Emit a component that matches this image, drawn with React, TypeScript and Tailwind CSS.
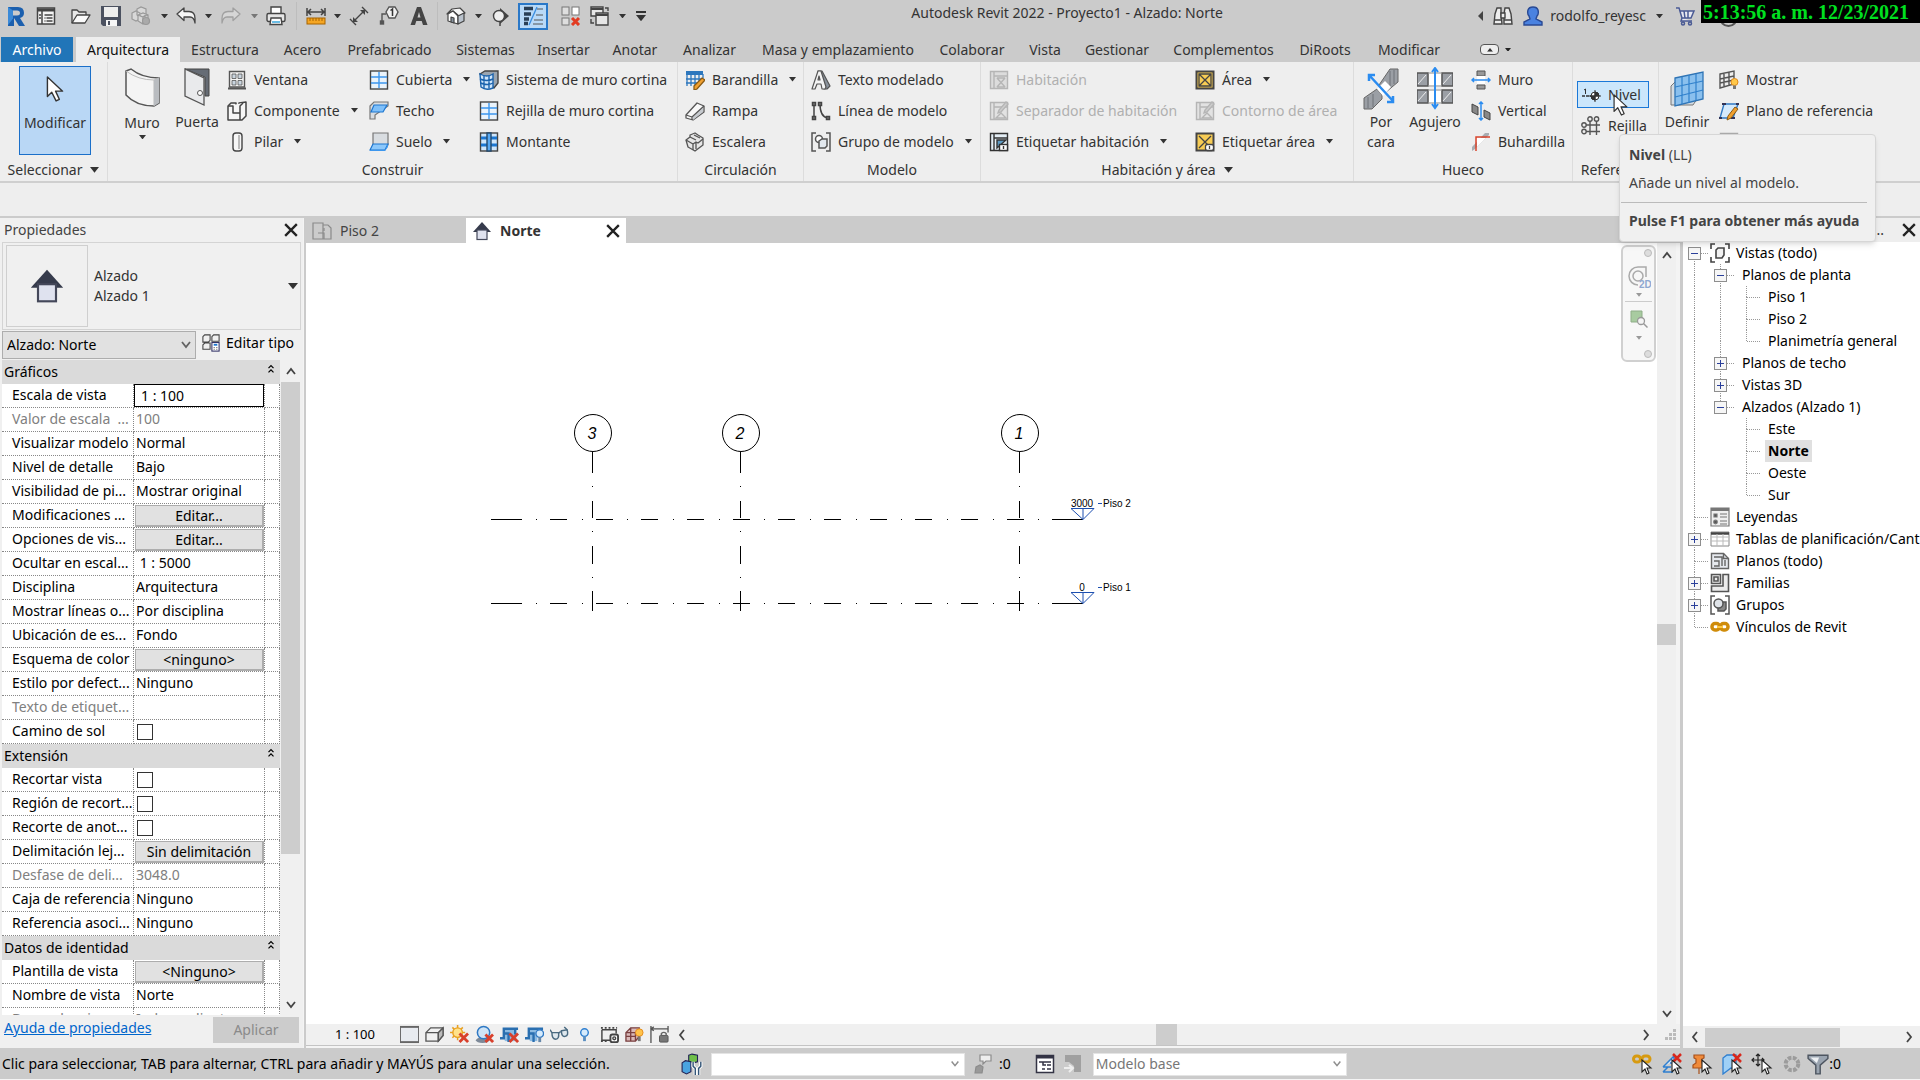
import type { ReactNode } from "react";

const icons: Record<string, ReactNode> = {
  revit: (
    <>
      <path d="M2 1h10q6 0 6 6 0 4-4 5l5 8h-6l-5-8v8H2z" fill="#1b5fae" />
      <path d="M7 4.500h4q3 0 3 2.500t-3 2.500H7z" fill="#cbcbcb" />
      <path d="M2 1l5 3.500v8L2 19z" fill="#3b8ad8" />
    </>
  ),
  menu: (
    <g fill="none" stroke="#444" strokeWidth="1.500">
      <rect x="1.500" y="2" width="17" height="16" fill="#f4f4f4" />
      <path d="M1.500 4h17" strokeWidth="3" />
      <path d="M6 5v13M8.500 9h8M10.500 12h6M10.500 15h6" />
      <path d="M8.500 12h1M8.500 15h1M3 9h2M3 12h2" />
    </g>
  ),
  open: (
    <g fill="#e8e8e8" stroke="#444" strokeWidth="1.300" strokeLinejoin="round">
      <path d="M1 17V4h5l2 2h7v3" />
      <path d="M1 17l5-8h13l-5 8z" fill="#fafafa" />
    </g>
  ),
  save: (
    <>
      <path d="M0 0h20v20H2l-2-2z" fill="#4b5160" />
      <path d="M3 1h14v10H3z" fill="#eee" />
      <path d="M5 14h11v6H5z" fill="#f6f6f6" />
      <path d="M7 15h2v4H7z" fill="#4b5160" />
    </>
  ),
  cube: (
    <g fill="#d8d8d8" stroke="#999" strokeWidth="1.200">
      <path d="M1 7l4-2 4 2v6l-4 2-4-2zM6 3l4-2 5 2v6l-5 3-4-3z" />
      <path d="M7 9l5-2 5 2v6l-5 3-5-3zM7 9l5 2 5-2M12 11v7" />
      <circle cx="15" cy="15" r="3.500" fill="#aaa" />
    </g>
  ),
  undo: <path d="M1 8l7-6v3.500h5q6 0 6 7V17q-1-6-5-6H8v3.500z" fill="#f5f5f5" stroke="#444" strokeWidth="1.300" strokeLinejoin="round" />,
  redo: <path d="M19 8l-7-6v3.500H7q-6 0-6 7V17q1-6 5-6h6v3.500z" fill="#d6d6d6" stroke="#a0a0a0" strokeWidth="1.300" strokeLinejoin="round" />,
  print: (
    <g stroke="#444" strokeWidth="1.400">
      <path d="M5 8V1h10v7" fill="#fff" />
      <rect x="1" y="7.500" width="18" height="8" rx="1.500" fill="#e6e6e6" />
      <path d="M5 12h10l1 6.500H4z" fill="#fff" />
      <path d="M6 16h8" stroke="#2a9fd8" />
    </g>
  ),
  measure: (
    <>
      <path d="M2 6h16M5 3L2 6l3 3M15 3l3 3-3 3M1 2v8M19 2v8" fill="none" stroke="#444" strokeWidth="1.500" />
      <rect x="1" y="12" width="18" height="6" fill="#f5a623" stroke="#a86400" />
      <path d="M4 12v3M7 12v3M10 12v3M13 12v3M16 12v3" stroke="#a86400" />
    </>
  ),
  dimension: (
    <g fill="none" stroke="#444" strokeWidth="1.400">
      <path d="M4 16L16 4M1 13l6 6M13 1l6 6" />
      <path d="M4 16v-5l5 5zM16 4v5l-5-5z" fill="#444" stroke="none" />
    </g>
  ),
  tag: (
    <>
      <g fill="none" stroke="#555" strokeWidth="1.400">
        <path d="M10 1h6l3 5-3 6h-6L7 6z" fill="#f2f2f2" />
        <path d="M7 8H3v8" />
        <rect x="1.500" y="15" width="3" height="3" fill="#555" />
      </g>
      <path d="M11.500 4.500L13.500 3v7" fill="none" stroke="#333" strokeWidth="1.500" />
    </>
  ),
  letterA: <path d="M8 1h4l6.500 18H14l-1.300-4H7.300L6 19H1.500zM8.500 11.500h3L10 6z" fill="#444" />,
  house3d: (
    <g stroke="#444" strokeWidth="1.200" strokeLinejoin="round">
      <path d="M1 8l5-5 8-1 5 5-6 3-6-5z" fill="#f4f4f4" />
      <path d="M2 8l5-3 5 5v8l-10-3z" fill="#fff" />
      <path d="M12 10l6-3v8l-6 3z" fill="#b9c2cc" />
      <path d="M5 16v-5l3 1v5z" fill="#8894a0" />
    </g>
  ),
  section: (
    <>
      <path d="M10 2l9 8-9 8z" fill="#444" />
      <circle cx="9" cy="10" r="5.500" fill="#eee" stroke="#444" strokeWidth="1.400" />
      <path d="M10 16v4" stroke="#444" strokeWidth="1.500" />
    </>
  ),
  thin: (
    <g fill="none" stroke="#2b3f55">
      <path d="M1 2.500h9M1 8h7M1 13h5M1 17.500h4" strokeWidth="3.500" />
      <path d="M14 1L6 19" stroke="#3a8de0" strokeWidth="1.300" />
      <path d="M14 3h6M13 9h7M11 14h9M10 18h10" stroke="#555" />
    </g>
  ),
  closeWins: (
    <>
      <g fill="#dedede" stroke="#777">
        <rect x="1" y="1" width="7" height="8" /><rect x="11" y="1" width="7" height="8" fill="#fff" /><rect x="1" y="12" width="7" height="7" />
      </g>
      <path d="M11 12l7 7M18 12l-7 7" stroke="#e23b22" strokeWidth="3" />
    </>
  ),
  switchWins: (
    <g fill="#e6e6e6" stroke="#444" strokeWidth="1.400">
      <path d="M1 1h12v9H1z" /><path d="M6 7h12v12H6z" /><path d="M1 3h12M6 9h12" strokeWidth="2" />
      <path d="M15 2h3v3M1 13v4h3" fill="none" />
    </g>
  ),
  binoculars: (
    <g fill="#eee" stroke="#444" strokeWidth="1.400">
      <path d="M4 2h4v6l1 10H1l1-10zM12 2h4l2 6 1 10h-8V8z" /><path d="M8 7h4v5H8zM1 14h8M11 14h8" />
    </g>
  ),
  user: <path d="M6 10Q4 8 5 4q1-3 5-3t5 3q1 4-1 6l-1 3 6 3v3H1v-3l6-3z" fill="#4a82e0" stroke="#2a4a94" strokeWidth="1.400" />,
  cart: (
    <g fill="none" stroke="#4a5a94" strokeWidth="1.500">
      <path d="M1 2h3l3 10h9l3-7H5M7 12l-1 3h11" fill="#e8e8f0" /><path d="M9 5l1 7M13 5v7" /><circle cx="8" cy="17.500" r="1.500" /><circle cx="15" cy="17.500" r="1.500" />
    </g>
  ),
  window: (
    <g fill="#f4f4f4" stroke="#555" strokeWidth="1.400">
      <path d="M2.500 1.500h15V17h-15z" /><path d="M5 4h4v4.500H5zM11 4h4v4.500h-4zM5 10.500h4V15H5zM11 10.500h4V15h-4z" fill="#c9d4de" strokeWidth=".8" /><path d="M1 18.500h18" strokeWidth="2" />
    </g>
  ),
  component: (
    <g fill="#f6f6f6" stroke="#444" strokeWidth="1.500" strokeLinejoin="round">
      <path d="M1 5l3-3h5v9h3V2l7-1v14l-4 4H1z" /><path d="M1 5h5v7h7V5l3-3M13 5v14" />
    </g>
  ),
  column: (
    <g stroke="#444" strokeWidth="1.400">
      <rect x="6" y="1" width="9" height="18" rx="3" fill="#f6f6f6" /><path d="M12 3v14" stroke="#bbb" strokeWidth="2" />
    </g>
  ),
  grid: (
    <>
      <rect x="1.500" y="1" width="17" height="18" fill="#eaf3fb" stroke="#444" strokeWidth="1.400" />
      <path d="M10 2v16M2 7h16M2 13h16" stroke="#3d97ee" strokeWidth="1.400" />
    </>
  ),
  ceiling: (
    <g strokeWidth="1.200" stroke="#777">
      <path d="M1 5l4-4h14v4L6 14v4H1z" fill="#d9dde1" /><path d="M5 4h13l-4 7H2z" fill="#7fc0fa" stroke="#1c76d0" />
    </g>
  ),
  floor: (
    <g strokeWidth="1.200">
      <path d="M4 1h15v12H4z" fill="#d9dde1" stroke="#777" /><path d="M1 18l3-6h15l-3 6z" fill="#8cc8fb" stroke="#1c76d0" /><path d="M1 18h15l3-6v3l-3 4H1z" fill="#3d97ee" />
    </g>
  ),
  curtainSystem: (
    <g stroke="#1b63ad" strokeWidth="1.400">
      <path d="M1 4l5-3h13v12l-4 5z" fill="#9aa5b0" stroke="#444" /><path d="M1 4q7 4 13 0v14q-7 3-12-1z" fill="#cfe6fb" /><path d="M5 5.500v13M10 5.500v13M1 9q7 3 13 0M1.500 13q7 3 12.500 0" fill="none" />
    </g>
  ),
  mullion: (
    <g strokeWidth="1.400">
      <rect x="1.500" y="1" width="17" height="18" fill="#cfe6fb" stroke="#444" /><path d="M2 6h16M2 13h16" stroke="#1c76d0" strokeWidth="3" /><path d="M8 1h4v18H8z" fill="#59a9f2" stroke="#24496c" />
    </g>
  ),
  railing: (
    <g fill="none" stroke="#2d77bd" strokeWidth="1.300">
      <path d="M1 3h17" strokeWidth="4" /><path d="M2 4v12M6 4v12M10 4v12M14 4v8M18 4v4M1 9h17M1 13h12" /><path d="M17 8l3 2-8 9-3 1v-4z" fill="#f0a030" stroke="#8a5a12" />
    </g>
  ),
  ramp: (
    <g fill="#f8f8f8" stroke="#555" strokeWidth="1.300" strokeLinejoin="round">
      <path d="M1 14L12 2l7 3v6L8 19l-7-2z" /><path d="M8 16l10-9v4L8 19z" fill="#c6cacf" stroke="none" /><path d="M1 14l6 2 12-11M7 16v3" fill="none" />
    </g>
  ),
  stair: (
    <g fill="#e6e6e6" stroke="#555" strokeWidth="1.300" strokeLinejoin="round">
      <path d="M1 8l4-3V3l5-2 3 2 5 3v7l-8 6-7-4z" /><path d="M1 8l7 4 3-2 2 1 5-4M5 5l6 3M8 12v6M11 10v7M9 3l6 3" fill="none" />
    </g>
  ),
  modelText: (
    <g stroke="#555" strokeWidth="1.200" strokeLinejoin="round">
      <path d="M7 1h4l8 15-3 3h-3L8 4z" fill="#8a929b" /><path d="M7 1h3l5 16-1 2h-3l-1-5H6l-2 5H1zM7 10h2L8 6z" fill="#f4f4f4" />
    </g>
  ),
  modelLine: (
    <g fill="none" stroke="#444" strokeWidth="1.500">
      <path d="M3 3v14M9 3q0 13 8 14" /><path d="M1.500 1.500h3v3h-3zM1.500 15.500h3v3h-3zM7.500 1.500h3v3h-3zM15.500 15.500h3v3h-3z" fill="#777" />
    </g>
  ),
  group: (
    <g fill="none" stroke="#555" strokeWidth="1.500">
      <path d="M5 1H1v18h4M15 1h4v18h-4" /><circle cx="8" cy="7" r="3.500" fill="#fff" /><path d="M8 9l3-2h5v7l-2 2H8z" fill="#e2e8ee" />
    </g>
  ),
  groups: (
    <g fill="none" stroke="#555" strokeWidth="1.500">
      <path d="M5 1H1v18h4M15 1h4v18h-4" /><path d="M8 8l3-1h5v7l-2 2H8z" fill="#888" /><circle cx="8.500" cy="8.500" r="4.500" fill="#dfe3e8" />
    </g>
  ),
  room: (
    <g fill="none" stroke="#b5b5b5" strokeWidth="1.400">
      <path d="M1.500 1.500h17v17h-17z" fill="#dcdcdc" /><path d="M5 2v16M5 6h13" /><path d="M8 8l8 9M16 8l-8 9M8 8h8M8 17h8" />
    </g>
  ),
  roomSep: (
    <g fill="none" stroke="#b5b5b5" strokeWidth="1.400">
      <path d="M1.500 1.500h17v17h-17z" fill="#e2e2e2" /><path d="M5 2v16M5 6h13M7 17l5-5 5 5z" /><path d="M17 1l2 2-7 8-3 1 1-3z" fill="#ccc" />
    </g>
  ),
  roomTag: (
    <g fill="none" stroke="#333" strokeWidth="1.400">
      <path d="M1.500 1.500h17v17h-17z" fill="#e4eef5" /><path d="M5 2v16M5 6h13" /><path d="M8 8h9l-9 8z" fill="#5d9bc4" /><rect x="10.500" y="12.500" width="8" height="6" fill="#fff" /><path d="M14.500 14v3" />
    </g>
  ),
  area: (
    <g stroke="#444" strokeWidth="1.300">
      <rect x="1.500" y="1.500" width="17" height="17" fill="#f7cc54" strokeWidth="2" /><path d="M4 4l12 12M16 4L4 16M4 4h12v12H4z" fill="none" />
    </g>
  ),
  areaTag: (
    <g stroke="#444" strokeWidth="1.300">
      <rect x="1.500" y="1.500" width="17" height="17" fill="#f7cc54" strokeWidth="2" /><path d="M4 4l12 12M16 4L4 16" /><rect x="10.500" y="12.500" width="8" height="6" rx="2" fill="#fff" /><path d="M14.500 14v3" />
    </g>
  ),
  wallOpen: (
    <>
      <path d="M6 1h8v5H6zM6 15h8v4H6z" fill="#999" stroke="#555" /><path d="M6 6h8v8H6z" fill="#fff" />
      <path d="M1 10h18M3 8l-2 2 2 2M17 8l2 2-2 2" fill="none" stroke="#2b8cf0" strokeWidth="1.500" />
    </>
  ),
  vertical: (
    <>
      <path d="M1 3l6 3v8l-6-3zM13 9l6 3v7l-6-3z" fill="#888" stroke="#444" />
      <path d="M10 1v18M8 3l2-2 2 2M8 17l2 2 2-2" fill="none" stroke="#2b8cf0" strokeWidth="1.500" />
    </>
  ),
  dormer: (
    <>
      <path d="M1 19l3-2 14-14V1h-4L1 15z" fill="#a9adb2" /><path d="M6 15V6h9L6 15z" fill="#fff" />
      <path d="M5 19V5h14" fill="none" stroke="#d9442c" strokeWidth="1.500" />
    </>
  ),
  level: (
    <g stroke="#333">
      <path d="M1 11h9" strokeDasharray="3 1" strokeWidth="1.400" /><path d="M3 5l1.500-1v5" fill="none" /><circle cx="14" cy="11" r="4" fill="#fff" /><path d="M14 7a4 4 0 014 4h-8a4 4 0 004 4z" fill="#333" /><path d="M14 5v12M8 11h12" />
    </g>
  ),
  gridLines: (
    <g fill="none" stroke="#555" strokeWidth="1.400">
      <circle cx="9" cy="3" r="2.200" /><circle cx="15.500" cy="3" r="2.200" /><circle cx="3" cy="9" r="2.200" /><circle cx="3" cy="15.500" r="2.200" /><path d="M9 5v14M15.500 5v14M5 9h14M5 15.500h14" />
    </g>
  ),
  show: (
    <>
      <path d="M1 4l14-3v13L1 18zM5 3v14M10 2v13M1 9l14-3M1 13l14-3" fill="none" stroke="#555" strokeWidth="1.400" />
      <circle cx="15.500" cy="12" r="3.500" fill="#ffc84a" stroke="#e08a1a" /><path d="M14 15.500h3v3.500h-3z" fill="#777" />
    </>
  ),
  refPlane: (
    <>
      <path d="M5 3h14l-5 14H1z" fill="#d5eafc" stroke="#3079c4" strokeWidth="1.400" />
      <path d="M3 3h4M17 3h3M0 17h3M12 17h4" stroke="#335" strokeWidth="2" />
      <path d="M16 6l3 2-7 9-4 2 1-4z" fill="#f0a030" stroke="#8a5a12" />
    </>
  ),
  viewer: <path d="M1.500 1.500h17v17h-17zM2 6h16M8 6v12" fill="#ccc" stroke="#aaa" strokeWidth="1.400" />,
  elevation: (
    <>
      <path d="M10 1l9 10H1z" fill="#363b4c" /><rect x="5" y="9" width="10" height="9.500" fill="#dfe2ef" stroke="#44485a" strokeWidth="1.200" />
    </>
  ),
  plan: (
    <g fill="none" stroke="#8a8a8a" strokeWidth="1.200">
      <path d="M1 2h10v16H1zM11 4h5l3 3v11H8" /><path d="M6 12h6v6M12 7v3" />
    </g>
  ),
  editType: (
    <g fill="none" stroke="#444" strokeWidth="1.200">
      <path d="M1 3l2-2h6v6l-2 2H1zM1 12l2-2h6v7H1zM11 3l2-2h6v7h-8z" /><rect x="11" y="9.500" width="8" height="9.500" fill="#fff" stroke="#336" /><path d="M13 12h4" stroke="#1c76d0" strokeWidth="2" /><path d="M13 15h1M16 15h1M13 17h1M16 17h1" />
    </g>
  ),
  scale: <rect x="0" y="2" width="20" height="16" fill="#e8ebf0" stroke="#666" strokeWidth="2" />,
  box: (
    <g fill="#f1f1f1" stroke="#555" strokeWidth="1.400">
      <path d="M1 8l5-5h13v8l-5 6H1z" /><path d="M14 8l5-5v8l-5 6z" fill="#bbb" /><path d="M1 8h13v9M14 8l5-5" fill="none" />
    </g>
  ),
  sun: (
    <>
      <path d="M8 0v16M0 8h16M2.500 2.500l11 11M13.500 2.500l-11 11" stroke="#e8a020" strokeWidth="1.600" /><circle cx="8" cy="8" r="5" fill="#ffe28a" stroke="#e8a020" strokeWidth="1.500" />
      <path d="M10 9l9 9M19 9l-9 9" stroke="#d8402c" strokeWidth="3" />
    </>
  ),
  shadow: (
    <>
      <ellipse cx="8" cy="16" rx="7" ry="3" fill="#7d8998" /><circle cx="9" cy="8" r="6.500" fill="#cfe4f6" stroke="#3079c4" strokeWidth="1.600" />
      <path d="M11 10l8 8M19 10l-8 8" stroke="#d8402c" strokeWidth="3" />
    </>
  ),
  crop: (
    <>
      <path d="M5 5h12v12H5z" fill="#8dbbe2" /><path d="M0 14h4V4h15M5 9h4v9M16 4v6" fill="none" stroke="#2a6fb0" strokeWidth="2.500" /><path d="M10 9l9 9M19 9l-9 9" stroke="#d8402c" strokeWidth="3" />
    </>
  ),
  cropShow: (
    <>
      <path d="M5 5h8v12H5z" fill="#8dbbe2" /><path d="M0 14h4V4h15M5 9h4v9" fill="none" stroke="#2a6fb0" strokeWidth="2.500" /><circle cx="15.500" cy="9" r="4" fill="#d6ebfc" stroke="#3079c4" strokeWidth="1.400" /><path d="M14 13h3v5h-3z" fill="#68a" />
    </>
  ),
  glasses: (
    <g fill="#dfe8ee" stroke="#4a6a80" strokeWidth="1.500">
      <path d="M2 8h7q1 7-3 7T2 8zM12 6l6-1q2 6-2 7t-4-6z" /><path d="M9 9q1-2 3-2M2 8L0 5M18 5l-3-3" fill="none" />
    </g>
  ),
  bulb: (
    <>
      <circle cx="10" cy="8" r="4" fill="#d6ebfc" stroke="#2f7fd0" strokeWidth="1.500" /><path d="M8.500 12h3v5h-3z" fill="#5b8fc0" />
    </>
  ),
  viewProps: (
    <g fill="none" stroke="#444" strokeWidth="1.500">
      <path d="M2 5v11h9M2 5h15v4" /><path d="M1 3h17M1 17h8" strokeDasharray="2 2" strokeWidth="2" /><rect x="11" y="10" width="8" height="8" rx="2" fill="#fff" strokeWidth="2" /><circle cx="15" cy="14" r="1.500" />
    </g>
  ),
  analytic: (
    <>
      <path d="M1 8l5-5h9v9l-4 5H1zM1 8h10v9M6 3v14M1 12h10" fill="#d9b9b9" stroke="#7a4040" strokeWidth="1.400" /><circle cx="15" cy="8" r="4" fill="#ffc24a" stroke="#e48a1a" /><path d="M13.500 12h3v5h-3z" fill="#777" />
    </>
  ),
  lockView: (
    <>
      <path d="M1 1v18M19 1v7M1 4h18M4 2L1 4l3 2" fill="none" stroke="#555" strokeWidth="1.400" /><rect x="10" y="11" width="9" height="7" rx="1" fill="#777" stroke="#555" /><path d="M12 11V9q2.500-2.500 5 0v2" fill="none" stroke="#666" strokeWidth="1.500" />
    </>
  ),
  workset: (
    <g stroke="#225" strokeWidth="1">
      <path d="M7 2l3-1 5 1v6l-4 1-4-1z" fill="#6fbf4a" /><path d="M1 9l3-2 5 1v9l-4 2-4-2z" fill="#4aa3e0" /><path d="M11 8v4l2 2v6M18 8v4l-2 2v6" fill="none" stroke="#fff" strokeWidth="3" /><path d="M11 8v4l2 2v6M18 8v4l-2 2v6" fill="none" stroke="#357" strokeWidth="1.300" />
    </g>
  ),
  editable: (
    <g fill="#eee" stroke="#8c8c8c" strokeWidth="1.200">
      <path d="M7 1h11v6h-5l-3 3V7H7z" /><path d="M2 19l1-6 4-2 3 2-1 6z" fill="#999" />
    </g>
  ),
  options: (
    <g fill="none" stroke="#334" strokeWidth="1.500">
      <path d="M1.500 1.500h17v17h-17z" fill="#fff" /><path d="M2 3h16" strokeWidth="3" /><path d="M4 8h4v3h3M8 8h8M12 11h4M7 15h3M12 15h4" />
    </g>
  ),
  addOption: (
    <>
      <path d="M2 1h16v17h-7v-6L6 8H2z" fill="#a0a0a0" /><path d="M1 14h8M6 11l4 3-4 4" fill="none" stroke="#eee" strokeWidth="2" />
    </>
  ),
  chain: (
    <g fill="none" stroke="#d08c0a" strokeWidth="3.500">
      <rect x="2" y="6.500" width="7.500" height="6.500" rx="3" /><rect x="10.500" y="6.500" width="7.500" height="6.500" rx="3" /><path d="M7 10h6" stroke="#ffc83d" strokeWidth="2" />
    </g>
  ),
  legend: (
    <g fill="#efefef" stroke="#777" strokeWidth="1.200">
      <path d="M1 1h18v18H1z" /><path d="M1 2.500h18" strokeWidth="3" /><path d="M4 7h3v3H4z" fill="#555" /><circle cx="5.500" cy="15" r="1.800" fill="#555" /><path d="M10 7h7M10 10h7M10 14h7M10 17h7" />
    </g>
  ),
  schedule: (
    <g fill="#fff" stroke="#888" strokeWidth="1">
      <path d="M1 3h18v14H1z" /><path d="M1 4.500h18" stroke="#444" strokeWidth="2.500" /><path d="M1 8h18M1 12h18M7 5v12M13 5v12" stroke="#bbb" />
    </g>
  ),
  sheet: (
    <g fill="none" stroke="#666" strokeWidth="1.400">
      <path d="M1.500 2.500h12l5 5v10h-17z" fill="#e6e9ee" /><path d="M4 6h8v9M4 10h5v5H4M15 9v6M13.500 2.500v5h5" />
    </g>
  ),
  family: (
    <g fill="#ececec" stroke="#555" strokeWidth="1.600">
      <path d="M1.500 1.500h9v9h-9zM1.500 13v5.500h17v-17H13V13z" /><path d="M4 4h4v4H4z" />
    </g>
  ),
  views: (
    <g fill="none" stroke="#444" strokeWidth="1.600">
      <path d="M1 6V1h4M15 1h4v5M1 14v5h4M15 19h4v-5" /><path d="M6 7l2-2h6v7l-2 3H6z" fill="#f2f2f2" />
    </g>
  ),
};

function Icon({ name, className = "size-5" }: { name: string; className?: string }) {
  return (
    <svg viewBox="0 0 20 20" className={`${className} shrink-0`} aria-hidden="true">
      {icons[name]}
    </svg>
  );
}

function Caret({ className = "w-2 fill-[#333]" }: { className?: string }) {
  return (
    <svg viewBox="0 0 8 5" className={`${className} shrink-0`} aria-hidden="true">
      <path d="M0 0h8L4 5z" />
    </svg>
  );
}

function Cross({ className = "size-3" }: { className?: string }) {
  return (
    <svg viewBox="0 0 12 12" className={className} aria-hidden="true">
      <path d="M1 1l10 10M11 1L1 11" stroke="#222" strokeWidth="2" />
    </svg>
  );
}

function Chevron({ dir, className = "size-3" }: { dir: "up" | "down" | "left" | "right"; className?: string }) {
  const d = { up: "M2 9l4-5 4 5", down: "M2 3l4 5 4-5", left: "M8 1L4 6l4 5", right: "M4 1l4 5-4 5" }[dir];
  return (
    <svg viewBox="0 0 12 12" className={`${className} shrink-0`} aria-hidden="true">
      <path d={d} fill="none" stroke="#444" strokeWidth="1.800" />
    </svg>
  );
}

function Pointer({ className }: { className: string }) {
  return (
    <svg viewBox="0 0 16 24" className={className} aria-hidden="true">
      <path d="M1 1v18l4-4 4 8 3-1.500L8.500 14H15z" fill="#fff" stroke="#333" strokeWidth="1.300" strokeLinejoin="round" />
    </svg>
  );
}

function ToolButton({ name, label, w }: { name: string; label: string; w: string }) {
  return (
    <button aria-label={label} className={`flex h-full items-center justify-center ${w}`}>
      <Icon name={name} />
    </button>
  );
}

function ToolCaret({ label, dim }: { label: string; dim?: boolean }) {
  return (
    <button aria-label={label} className="flex h-full w-4 items-center justify-center">
      <Caret className={dim ? "w-[7px] fill-[#777]" : "w-[7px] fill-[#333]"} />
    </button>
  );
}

function TitleBar() {
  return (
    <header className="flex h-[37px] items-start">
      <div className="flex h-8 items-center">
        <ToolButton name="revit" label="Revit" w="w-8" />
        <ToolButton name="menu" label="Inicio" w="w-7" />
        <ToolButton name="open" label="Abrir" w="ml-1.5 w-[30px]" />
        <ToolButton name="save" label="Guardar" w="w-[30px]" />
        <ToolButton name="cube" label="Sincronizar" w="w-[30px]" />
        <ToolCaret label="Más sincronizar" />
        <ToolButton name="undo" label="Deshacer" w="w-7" />
        <ToolCaret label="Lista deshacer" />
        <ToolButton name="redo" label="Rehacer" w="w-[30px]" />
        <ToolCaret label="Lista rehacer" dim />
        <ToolButton name="print" label="Imprimir" w="w-7" />
        <span className="mx-1.5 h-7 w-px bg-[#bdbdbd]" />
        <ToolButton name="measure" label="Medir" w="w-[26px]" />
        <ToolCaret label="Más medir" />
        <ToolButton name="dimension" label="Cota alineada" w="w-7" />
        <ToolButton name="tag" label="Etiquetar" w="w-8" />
        <ToolButton name="letterA" label="Texto" w="w-7" />
        <span className="mx-1 h-7 w-px bg-[#bdbdbd]" />
        <ToolButton name="house3d" label="Vista 3D" w="w-7" />
        <ToolCaret label="Más vistas 3D" />
        <ToolButton name="section" label="Sección" w="mr-1 w-7" />
        <button aria-label="Líneas finas" className="flex h-[27px] w-[30px] items-center justify-center border-2 border-[#2a78c8] bg-[#b9d9f7]">
          <Icon name="thin" />
        </button>
        <ToolButton name="closeWins" label="Cerrar ventanas inactivas" w="ml-2 w-[30px]" />
        <ToolButton name="switchWins" label="Cambiar ventanas" w="w-7" />
        <ToolCaret label="Lista de ventanas" />
        <button aria-label="Personalizar" className="ml-1.5 flex flex-col items-center gap-0.5">
          <span className="h-0.5 w-2.5 bg-[#333]" />
          <Caret className="w-2.5 fill-[#333]" />
        </button>
      </div>
      <h1 className="min-w-0 flex-1 truncate pl-[10px] text-center text-sm leading-[26px]">
        Autodesk Revit 2022 - Proyecto1 - Alzado: Norte
      </h1>
      <div className="flex h-8 items-center">
        <svg viewBox="0 0 5 10" className="mr-2.5 h-2.5 w-[5px]" aria-hidden="true"><path d="M5 0v10L0 5z" fill="#444" /></svg>
        <button aria-label="Buscar"><Icon name="binoculars" /></button>
        <button className="ml-2.5 flex items-center">
          <Icon name="user" />
          <span className="ml-[7px] text-sm">rodolfo_reyesc</span>
          <Caret className="ml-2.5 w-[7px] fill-[#333]" />
        </button>
        <button aria-label="Autodesk App Store" className="ml-3"><Icon name="cart" /></button>
        <div className="relative ml-1.5 h-full w-[219px]">
          <span className="absolute top-2 left-[18px] size-[19px] rounded-full border-2 border-[#555]" />
          <time className="absolute inset-x-0 top-0 h-[23px] bg-black pl-[2px] font-['Liberation_Serif',serif] text-[20px] leading-[24px] font-bold text-[#00e020]">
            5:13:56 a. m. 12/23/2021
          </time>
        </div>
      </div>
    </header>
  );
}

const tabs = [
  ["Estructura", "w-[90px]"],
  ["Acero", "w-[65px]"],
  ["Prefabricado", "w-[109px]"],
  ["Sistemas", "w-[83px]"],
  ["Insertar", "w-[73px]"],
  ["Anotar", "w-[70px]"],
  ["Analizar", "w-[79px]"],
  ["Masa y emplazamiento", "w-[178px]"],
  ["Colaborar", "w-[90px]"],
  ["Vista", "w-[56px]"],
  ["Gestionar", "w-[88px]"],
  ["Complementos", "w-[125px]"],
  ["DiRoots", "w-[78px]"],
  ["Modificar", "w-[90px]"],
];

function RibbonTabs() {
  return (
    <nav className="flex h-[25px] text-sm leading-[25px] whitespace-nowrap">
      <button className="ml-px w-[72px] bg-[#2175b8] text-white">Archivo</button>
      <button className="ml-[3px] w-[104px] bg-[#eee] text-[#111]">Arquitectura</button>
      {tabs.map(([label, w]) => (
        <button key={label} className={w}>{label}</button>
      ))}
      <button aria-label="Minimizar cinta" className="ml-[26px] flex items-center gap-1.5">
        <span className="flex h-[11px] w-[19px] items-center justify-center rounded border border-[#555] bg-[#eee]">
          <Caret className="w-1.5 rotate-180 fill-[#333]" />
        </span>
        <Caret className="w-1.5 fill-[#222]" />
      </button>
    </nav>
  );
}

function Small({ icon, label, caret, dim }: { icon: string; label: string; caret?: boolean; dim?: boolean }) {
  return (
    <button disabled={dim} className={`flex h-[31px] items-center gap-[7px] whitespace-nowrap ${dim ? "text-[#b0b0b0]" : ""}`}>
      <Icon name={icon} />
      <span>{label}</span>
      {caret && <Caret className="ml-1 w-[7px] fill-[#333]" />}
    </button>
  );
}

function Group({ title, w, caret, children }: { title: string; w: string; caret?: boolean; children: ReactNode }) {
  return (
    <section className={`flex shrink-0 flex-col border-r border-[#dcdcdc] ${w}`}>
      <div className="flex h-[97px] pt-0.5">{children}</div>
      <h2 className="flex h-[22px] items-center justify-center gap-2 whitespace-nowrap">
        {title}
        {caret && <Caret className="w-[9px] fill-[#333]" />}
      </h2>
    </section>
  );
}

function Ribbon() {
  return (
    <div className="flex h-[121px] border-b-2 border-[#cfcfcf] bg-[#eee] text-sm">
      <Group title="Seleccionar" w="w-[108px]" caret>
        <button className="mt-0.5 ml-[19px] flex h-[89px] w-[72px] flex-col items-center border border-[#1a6fc9] bg-[#b9d7f5] pt-[9px]">
          <Pointer className="h-[26px] w-[18px]" />
          <span className="mt-[11px]">Modificar</span>
        </button>
      </Group>
      <Group title="Construir" w="w-[570px]">
        <button className="ml-3 flex w-11 flex-col items-center">
          <svg viewBox="0 0 36 40" className="mt-[4px] h-10 w-9" aria-hidden="true">
            <path d="M2 3l5-2q11 9 28 9v25l-5 3Q12 38 2 27z" fill="#f4f4f4" stroke="#555" strokeWidth="1.500" />
            <path d="M2 3q12 9 28 9v26M30 12l5-2" fill="none" stroke="#bbb" />
            <path d="M30 12l5-2v25l-5 3z" fill="#b9bcc0" />
          </svg>
          <span className="mt-[5px]">Muro</span>
          <Caret className="mt-0.5 w-[7px] fill-[#333]" />
        </button>
        <button className="ml-[7px] flex w-[52px] flex-col items-center">
          <svg viewBox="0 0 30 40" className="mt-[3px] h-10 w-[30px]" aria-hidden="true">
            <path d="M3 2h24v27h-4V10z" fill="#666c75" stroke="#444" />
            <path d="M3 2l19 9v27L3 29z" fill="#e9eaec" stroke="#555" strokeWidth="1.300" />
            <circle cx="18" cy="26" r="2.500" fill="#fff" stroke="#555" />
          </svg>
          <span className="mt-[5px]">Puerta</span>
        </button>
        <div className="ml-1 w-[142px]">
          <Small icon="window" label="Ventana" />
          <Small icon="component" label="Componente" caret />
          <Small icon="column" label="Pilar" caret />
        </div>
        <div className="w-[110px]">
          <Small icon="grid" label="Cubierta" caret />
          <Small icon="ceiling" label="Techo" />
          <Small icon="floor" label="Suelo" caret />
        </div>
        <div>
          <Small icon="curtainSystem" label="Sistema de muro cortina" />
          <Small icon="grid" label="Rejilla de muro cortina" />
          <Small icon="mullion" label="Montante" />
        </div>
      </Group>
      <Group title="Circulación" w="w-[126px]">
        <div className="ml-[7px]">
          <Small icon="railing" label="Barandilla" caret />
          <Small icon="ramp" label="Rampa" />
          <Small icon="stair" label="Escalera" />
        </div>
      </Group>
      <Group title="Modelo" w="w-[177px]">
        <div className="ml-[7px]">
          <Small icon="modelText" label="Texto modelado" />
          <Small icon="modelLine" label="Línea de modelo" />
          <Small icon="group" label="Grupo de modelo" caret />
        </div>
      </Group>
      <Group title="Habitación y área" w="w-[373px]" caret>
        <div className="ml-2 w-[206px] whitespace-pre">
          <Small icon="room" label="Habitación" dim />
          <Small icon="roomSep" label="Separador de habitación" dim />
          <Small icon="roomTag" label="Etiquetar habitación" caret />
        </div>
        <div>
          <Small icon="area" label="Área" caret />
          <Small icon="roomSep" label="Contorno de área" dim />
          <Small icon="areaTag" label="Etiquetar área" caret />
        </div>
      </Group>
      <Group title="Hueco" w="w-[219px]">
        <button className="ml-1.5 flex w-[42px] flex-col items-center">
          <svg viewBox="0 0 36 44" className="mt-[3px] h-11 w-9" aria-hidden="true">
            <path d="M1 31L14 22l5 6v4L9 42H1zM35 2v13L23 25l-7-7L27 2z" fill="#9b9fa5" stroke="#666" />
            <path d="M5 30v11M10 27v13M27 4v16M31 3v14" stroke="#6f7378" />
            <path d="M14 22l8-8 6 6-8 9z" fill="#fff" />
            <path d="M6 8l24 26M6 14V8h6M24 35h6v-6" fill="none" stroke="#2b8cf0" strokeWidth="2.500" />
          </svg>
          <span className="mt-[1px]">Por</span>
          <span>cara</span>
        </button>
        <button className="ml-[3px] flex w-[60px] flex-col items-center">
          <svg viewBox="0 0 36 44" className="mt-[3px] h-11 w-9" aria-hidden="true">
            <path d="M0 6h11v13H0zM25 6h11v13H25zM0 23h11v13H0zM25 23h11v13H25z" fill="#9b9fa5" stroke="#555" strokeWidth="1.500" />
            <path d="M1 17L9 8M26 17l8-9M1 34l8-9M26 34l8-9" stroke="#eee" />
            <path d="M12 7h12v11H12zM12 24h12v11H12z" fill="#fff" />
            <path d="M11 6h14M11 19h14M11 23h14M11 36h14" stroke="#999" />
            <path d="M18 2v38M15 5l3-4 3 4M15 37l3 4 3-4" fill="none" stroke="#2b8cf0" strokeWidth="2" />
          </svg>
          <span className="mt-[1px]">Agujero</span>
        </button>
        <div className="ml-[6px]">
          <Small icon="wallOpen" label="Muro" />
          <Small icon="vertical" label="Vertical" />
          <Small icon="dormer" label="Buhardilla" />
        </div>
      </Group>
      <Group title="Referencia" w="w-[86px]">
        <div className="ml-1 pt-[17px]">
          <button className="relative flex h-[27px] w-[72px] items-center gap-[7px] border border-[#1a78d8] bg-[#cbe6fb] pl-[3px]">
            <Icon name="level" />
            Nivel
            <Pointer className="absolute top-3 left-[35px] h-[22px] w-[15px]" />
          </button>
          <button className="mt-1 flex h-[27px] items-center gap-[7px] pl-1">
            <Icon name="gridLines" />
            Rejilla
          </button>
        </div>
      </Group>
      <section className="flex pt-0.5">
        <button className="flex w-14 flex-col items-center">
          <svg viewBox="0 0 34 42" className="mt-1 h-[42px] w-[34px]" aria-hidden="true">
            <path d="M1 18l5-5h21v18l-4 6H1z" fill="#d3dbe2" stroke="#777" />
            <path d="M5 10l28-6v27L5 38z" fill="#8ac0ee" stroke="#2f74b5" strokeWidth="1.300" />
            <path d="M12 9v27M19 7v28M26 6v26M5 19l28-6M5 29l28-7" stroke="#2f80cc" strokeWidth="1.200" />
          </svg>
          <span className="mt-[2px]">Definir</span>
        </button>
        <div className="ml-1 w-[200px]">
          <Small icon="show" label="Mostrar" />
          <Small icon="refPlane" label="Plano de referencia" />
          <button aria-label="Visor" className="flex h-[31px] items-center"><Icon name="viewer" /></button>
        </div>
      </section>
    </div>
  );
}

type Kind = "text" | "edit" | "dim" | "button" | "check";
type Prop = [string, string, Kind];

const sections: { title: string; rows: Prop[] }[] = [
  {
    title: "Gráficos",
    rows: [
      ["Escala de vista", "1 : 100", "edit"],
      ["Valor de escala  ...", "100", "dim"],
      ["Visualizar modelo", "Normal", "text"],
      ["Nivel de detalle", "Bajo", "text"],
      ["Visibilidad de pi...", "Mostrar original", "text"],
      ["Modificaciones ...", "Editar...", "button"],
      ["Opciones de vis...", "Editar...", "button"],
      ["Ocultar en escal...", " 1 : 5000", "text"],
      ["Disciplina", "Arquitectura", "text"],
      ["Mostrar líneas o...", "Por disciplina", "text"],
      ["Ubicación de es...", "Fondo", "text"],
      ["Esquema de color", "<ninguno>", "button"],
      ["Estilo por defect...", "Ninguno", "text"],
      ["Texto de etiquet...", "", "dim"],
      ["Camino de sol", "", "check"],
    ],
  },
  {
    title: "Extensión",
    rows: [
      ["Recortar vista", "", "check"],
      ["Región de recort...", "", "check"],
      ["Recorte de anot...", "", "check"],
      ["Delimitación lej...", "Sin delimitación", "button"],
      ["Desfase de deli...", "3048.0", "dim"],
      ["Caja de referencia", "Ninguno", "text"],
      ["Referencia asoci...", "Ninguno", "text"],
    ],
  },
  {
    title: "Datos de identidad",
    rows: [
      ["Plantilla de vista", "<Ninguno>", "button"],
      ["Nombre de vista", "Norte", "text"],
      ["Dependencia", "Independiente", "dim"],
    ],
  },
];

function PropValue({ label, value, kind }: { label: string; value: string; kind: Kind }) {
  if (kind === "edit") {
    return <input aria-label={label} defaultValue={value} className="block h-[23px] w-full border border-black bg-white px-1.5" />;
  }
  if (kind === "button") {
    return (
      <button aria-label={label} className="ml-px block h-[22px] w-[129px] border border-r-2 border-b-2 border-[#adadad] bg-[#e1e1e1] leading-[19px]">
        {value}
      </button>
    );
  }
  if (kind === "check") {
    return <input type="checkbox" aria-label={label} className="ml-[3px] block size-4 appearance-none border border-[#333] bg-white" />;
  }
  return <span className="block pb-0.5 pl-0.5 whitespace-pre">{value}</span>;
}

function Properties() {
  return (
    <aside className="flex w-[303px] shrink-0 flex-col bg-[#f0f0f0] pl-0.5">
      <div className="flex h-6 items-center justify-between pr-[5px] pl-0.5 text-sm text-[#444]">
        <h2>Propiedades</h2>
        <button aria-label="Cerrar propiedades"><Cross className="size-3.5" /></button>
      </div>
      <button className="mr-0.5 flex h-[88px] items-center border border-[#d4d4d4] pl-[3px] text-left text-sm text-[#333]">
        <span className="flex size-[82px] items-center justify-center border border-[#cfcfcf]">
          <Icon name="elevation" className="size-9" />
        </span>
        <span className="ml-1.5 flex-1">Alzado<br />Alzado 1</span>
        <Caret className="mr-0.5 w-2.5 fill-[#333]" />
      </button>
      <div className="flex h-[30px] items-center text-sm text-black">
        <span className="relative block h-7 w-[194px]">
          <select aria-label="Tipo" className="h-full w-full appearance-none border border-[#adadad] bg-[#e1e1e1] pl-1">
            <option>Alzado: Norte</option>
          </select>
          <Chevron dir="down" className="pointer-events-none absolute top-2 right-1 size-3 opacity-80" />
        </span>
        <button className="ml-1.5 flex items-center gap-1.5 pb-1"><Icon name="editType" className="size-[18px]" />Editar tipo</button>
      </div>
      <div className="flex min-h-0 flex-1">
        <div className="min-h-0 flex-1 overflow-hidden bg-white">
          <table className="w-full table-fixed border-separate border-spacing-0 text-sm text-black">
            <colgroup><col className="w-[132px]" /><col className="w-[131px]" /><col /></colgroup>
            {sections.map((s) => (
              <tbody key={s.title}>
                <tr>
                  <th colSpan={3} className="h-6 bg-[#dadada] p-0 pr-1 pl-0.5 text-left font-normal">
                    <div className="flex items-center justify-between">
                      {s.title}
                      <svg viewBox="0 0 10 12" className="mb-1.5 h-2.5 w-2.5" aria-hidden="true">
                        <path d="M2 5l3-3 3 3M2 10l3-3 3 3" fill="none" stroke="#000" strokeWidth="1.500" />
                      </svg>
                    </div>
                  </th>
                </tr>
                {s.rows.map(([label, value, kind]) => (
                  <tr key={label} className={kind === "dim" ? "text-[#808080]" : ""}>
                    <td className="h-6 border-r border-b border-dotted border-[#888] p-0 pb-0.5 pl-2.5 whitespace-pre">{label}</td>
                    <td className="h-6 border-r border-b border-dotted border-[#888] p-0"><PropValue label={label} value={value} kind={kind} /></td>
                    <td className="h-6 border-r border-b border-dotted border-[#888] p-0" />
                  </tr>
                ))}
              </tbody>
            ))}
          </table>
        </div>
        <div className="ml-px flex w-[19px] flex-col items-center bg-[#f0f0f0]">
          <Chevron dir="up" className="my-[5px] size-3" />
          <div className="h-[472px] w-full bg-[#cdcdcd]" />
          <Chevron dir="down" className="mt-auto mb-1 size-3" />
        </div>
        <div className="w-[3px]" />
      </div>
      <div className="flex h-[33px] items-start justify-between pt-0.5 pr-1 pl-0.5 text-sm">
        <a href="#ayuda" className="leading-[22px] text-[#0066cc] underline">Ayuda de propiedades</a>
        <button disabled className="h-[26px] w-[86px] bg-[#cccccc] text-[#8a8a8a]">Aplicar</button>
      </div>
    </aside>
  );
}

const gridAxes = [
  { x: 287, label: "3" },
  { x: 435, label: "2" },
  { x: 714, label: "1" },
];

const levels = [
  { y: 276, elevation: "3000", label: "Piso 2" },
  { y: 360, elevation: "0", label: "Piso 1" },
];

function Drawing() {
  return (
    <svg className="block h-full w-full font-['Liberation_Sans',sans-serif]" aria-label="Alzado Norte">
      {gridAxes.map(({ x, label }) => (
        <g key={label} stroke="#000" strokeWidth="1" fill="none">
          <circle cx={x} cy="190" r="18.500" />
          <text x={x - 1} y="196" fill="#000" stroke="none" textAnchor="middle" fontSize="16" fontStyle="italic">{label}</text>
          <path d={`M${x - 0.5} 209v21m0 13v1m0 14v17m0 13v1m0 14v18m0 13v1m0 13v20`} />
        </g>
      ))}
      {levels.map(({ y, elevation, label }) => (
        <g key={label}>
          <path d={`M185 ${y + 0.5}h31M747 ${y + 0.5}h30`} stroke="#000" />
          {Array.from({ length: 12 }, (_, i) => (
            <path key={i} d={`M${230 + Math.round(i * 45.65)} ${y + 0.5}h1m13 0h17`} stroke="#000" />
          ))}
          <path d={`M777 ${y + 0.5}l-12-11h23zv-11`} fill="none" stroke="#1c4fb0" />
          <text x="776" y={y - 12} textAnchor="middle" fontSize="10">{elevation}</text>
          <path d={`M792 ${y - 15.5}h4`} stroke="#1c4fb0" />
          <text x="797" y={y - 12} fontSize="10">{label}</text>
        </g>
      ))}
    </svg>
  );
}

const viewTools = [
  ["scale", "Escala"],
  ["box", "Estilo visual"],
  ["sun", "Camino de sol"],
  ["shadow", "Sombras"],
  ["crop", "Recortar vista"],
  ["cropShow", "Mostrar región de recorte"],
  ["glasses", "Ocultar temporalmente"],
  ["bulb", "Mostrar elementos ocultos"],
  ["viewProps", "Propiedades de vista temporales"],
  ["analytic", "Modelo analítico"],
  ["lockView", "Restricciones"],
];

function Workspace() {
  return (
    <main className="flex min-w-0 flex-1 flex-col">
      <div className="flex h-[25px] bg-[#cbcbcb] text-sm">
        <button className="flex w-40 items-center gap-2 pl-1.5 text-[#444]"><Icon name="plan" />Piso 2</button>
        <div className="flex w-40 items-center bg-white pr-1.5 pl-1.5 font-bold text-[#333]">
          <Icon name="elevation" className="mr-2 size-5" />
          Norte
          <button aria-label="Cerrar Norte" className="ml-auto"><Cross className="size-3.5" /></button>
        </div>
      </div>
      <div className="flex min-h-0 flex-1 bg-white">
        <div className="relative min-w-0 flex-1">
          <Drawing />
          <div className="absolute top-0.5 right-px flex h-[117px] w-[35px] flex-col items-center rounded-md border-2 border-[#d0d0d0] bg-[#f7f7f7]">
            <span className="mt-0.5 mr-0.5 size-2 self-end rounded-full border border-[#bbb] bg-[#ddd]" />
            <button aria-label="Rueda de navegación" className="mt-2">
              <svg viewBox="0 0 24 24" className="size-6" aria-hidden="true">
                <path d="M19 12V2h-8a9 9 0 100 18" fill="none" stroke="#aaa" strokeWidth="1.500" />
                <circle cx="11" cy="11" r="5" fill="none" stroke="#aaa" strokeWidth="1.500" />
                <text x="12" y="23" fontSize="10" fontWeight="bold" fill="#8fa8d0" fontFamily="Liberation Sans">2D</text>
              </svg>
            </button>
            <Caret className="mt-1 w-1.5 fill-[#999]" />
            <span className="mt-1 h-px w-[27px] bg-[#ccc]" />
            <button aria-label="Zoom de región" className="mt-2">
              <svg viewBox="0 0 18 18" className="size-[18px]" aria-hidden="true">
                <path d="M1 1h11v11H1z" fill="#a8cba0" stroke="#8fae88" /><circle cx="11" cy="11" r="3.500" fill="#f4f4f4" stroke="#999" strokeWidth="1.300" /><path d="M13.500 13.500l4 4" stroke="#999" strokeWidth="1.500" />
              </svg>
            </button>
            <Caret className="mt-2 w-1.5 fill-[#999]" />
            <span className="mt-auto mr-0.5 mb-0.5 size-2 self-end rounded-full border border-[#bbb] bg-[#ddd]" />
          </div>
        </div>
        <div className="flex w-[19px] flex-col items-center bg-[#f0f0f0]">
          <Chevron dir="up" className="mt-1.5 size-3" />
          <div className="mt-[363px] h-[21px] w-full bg-[#cdcdcd]" />
          <Chevron dir="down" className="mt-auto mb-1 size-3" />
        </div>
        <div className="w-1 bg-[#f4f4f4]" />
      </div>
      <div className="flex h-[22px] items-center border-b border-[#c4c4c4] bg-[#f0f0f0] pl-[29px] text-[13px] text-black">
        <span className="w-[62px]">1 : 100</span>
        {viewTools.map(([name, label]) => (
          <button key={name} aria-label={label} className="flex w-[25px] justify-center"><Icon name={name} className="size-[19px]" /></button>
        ))}
        <Chevron dir="left" className="ml-1 size-3" />
        <div className="flex h-full flex-1 items-center">
          <span className="grow-[467]" />
          <span className="h-full w-[21px] bg-[#cdcdcd]" />
          <span className="grow-[463]" />
        </div>
        <Chevron dir="right" className="size-3" />
        <svg viewBox="0 0 12 12" className="mr-1 ml-3 size-3" aria-hidden="true">
          <path d="M9 0h3v3H9zM9 4h3v3H9zM5 4h3v3H5zM9 8h3v3H9zM5 8h3v3H5zM1 8h3v3H1z" fill="#bbb" />
        </svg>
      </div>
      <div className="h-0.5 bg-[#f4f4f4]" />
    </main>
  );
}

// guide cells: v line, t branch, l last branch, plus/minus boxes, blank
type Guide = "v" | "t" | "l" | "+" | "-" | "-top" | "-end" | "";
type Node = { g: Guide[]; label: string; icon?: string; active?: boolean };

const tree: Node[] = [
  { g: ["-top"], label: "Vistas (todo)", icon: "views" },
  { g: ["v", "-"], label: "Planos de planta" },
  { g: ["v", "v", "t"], label: "Piso 1" },
  { g: ["v", "v", "t"], label: "Piso 2" },
  { g: ["v", "v", "l"], label: "Planimetría general" },
  { g: ["v", "+"], label: "Planos de techo" },
  { g: ["v", "+"], label: "Vistas 3D" },
  { g: ["v", "-end"], label: "Alzados (Alzado 1)" },
  { g: ["v", "", "t"], label: "Este" },
  { g: ["v", "", "t"], label: "Norte", active: true },
  { g: ["v", "", "t"], label: "Oeste" },
  { g: ["v", "", "l"], label: "Sur" },
  { g: ["t"], label: "Leyendas", icon: "legend" },
  { g: ["+"], label: "Tablas de planificación/Cantidades", icon: "schedule" },
  { g: ["t"], label: "Planos (todo)", icon: "sheet" },
  { g: ["+"], label: "Familias", icon: "family" },
  { g: ["+"], label: "Grupos", icon: "groups" },
  { g: ["l"], label: "Vínculos de Revit", icon: "chain" },
];

function GuideCell({ type }: { type: Guide }) {
  const top = type !== "" && type !== "-top";
  const bottom = type !== "" && type !== "l" && type !== "-end";
  const boxed = type.startsWith("+") || type.startsWith("-");
  return (
    <svg viewBox="0 0 26 22" className="h-[22px] w-[26px] shrink-0" aria-hidden="true">
      <g stroke="#999" strokeDasharray="1 1">
        {top && <path d="M11.500 0v11" />}
        {bottom && <path d="M11.500 11v11" />}
        {type !== "" && type !== "v" && <path d="M12 11.500h14" />}
      </g>
      {boxed && (
        <>
          <rect x="5.500" y="5.500" width="12" height="12" fill="#f6f6f6" stroke="#8e8e8e" />
          <path d={type === "+" ? "M8 11.500h7M11.500 8v7" : "M8 11.500h7"} stroke="#2a3f9a" strokeWidth="1" />
        </>
      )}
    </svg>
  );
}

function Browser() {
  return (
    <aside className="flex w-[237px] shrink-0 flex-col overflow-hidden bg-white">
      <div className="flex h-6 items-center justify-end gap-[18px] bg-[#eee] pr-1 text-sm">
        <span>...</span>
        <button aria-label="Cerrar navegador"><Cross className="size-3.5" /></button>
      </div>
      <ul className="min-h-0 flex-1 text-sm leading-[22px] whitespace-nowrap text-black">
        {tree.map((n) => (
          <li key={n.label} className="flex h-[22px] items-center">
            {n.g.map((g, i) => <GuideCell key={i} type={g} />)}
            {n.icon && <Icon name={n.icon} className="ml-px size-5" />}
            <button className={n.active ? "ml-1 bg-[#e0e0e0] px-[3px] font-bold" : n.icon ? "pl-1.5" : "pl-[7px]"}>{n.label}</button>
          </li>
        ))}
      </ul>
      <div className="flex h-[22px] items-center bg-[#f0f0f0] pr-[5px] pl-1.5">
        <Chevron dir="left" />
        <div className="ml-1 h-[19px] w-[135px] bg-[#cdcdcd]" />
        <Chevron dir="right" className="ml-auto size-3" />
      </div>
    </aside>
  );
}

const selectTools = [
  ["chain", "Seleccionar vínculos"],
  ["ceiling", "Seleccionar elementos subyacentes"],
  ["pin", "Seleccionar elementos bloqueados"],
  ["face", "Seleccionar por cara"],
  ["move", "Arrastrar al seleccionar"],
];

function SelectIcon({ name }: { name: string }) {
  return (
    <svg viewBox="0 0 22 22" className="size-[22px]" aria-hidden="true">
      {name === "chain" && (
        <g fill="none" stroke="#d79a10" strokeWidth="3"><rect x="2.500" y="3" width="7" height="6" rx="3" /><rect x="11" y="3" width="8" height="6" rx="3" /></g>
      )}
      {name === "ceiling" && <path d="M2 14L13 3v7h-4M2 14h8M2 19l5-5M2 19h10" fill="#d6eafc" stroke="#2f7fd0" strokeWidth="1.500" />}
      {name === "pin" && <path d="M3 2h10v3l-2 1v4l3 2v3H2v-3l3-2V6L3 5zM8 15v6" fill="#ef8a3a" stroke="#a8501a" strokeWidth="1.200" />}
      {name === "face" && <path d="M2 5l4-3h9v14l-5-1-4 3-4 3z" fill="#9fd0f6" stroke="#2f7fd0" strokeWidth="1.300" />}
      {name === "move" && <path d="M7 1v12M1 7h12M5 3l2-2 2 2M5 11l2 2 2-2M3 5L1 7l2 2M11 5l2 2-2 2" fill="none" stroke="#222" strokeWidth="1.200" />}
      {(name === "ceiling" || name === "face") && <path d="M12 1l8 8M20 1l-8 8" stroke="#d8281c" strokeWidth="2.500" />}
      <path d="M11 7v12l3-3 2 5 2-1-2-5h4z" fill="#fff" stroke="#222" strokeWidth="1.100" />
    </svg>
  );
}

function StatusSelect({ label, value }: { label: string; value: string }) {
  return (
    <span className="relative block h-[23px] w-[254px]">
      <select aria-label={label} className="block h-full w-full appearance-none border border-[#e4e4e4] bg-white pl-0.5 text-sm text-[#777]">
        <option>{value}</option>
      </select>
      <Chevron dir="down" className="pointer-events-none absolute top-1.5 right-[5px] size-2.5 opacity-60" />
    </span>
  );
}

function StatusBar() {
  return (
    <footer className="flex h-8 items-center border-b border-[#f4f4f4] bg-[#cbcbcb] pt-px text-sm text-black">
      <p className="w-[681px] truncate pl-0.5">
        Clic para seleccionar, TAB para alternar, CTRL para añadir y MAYÚS para anular una selección.
      </p>
      <button aria-label="Subproyectos" className="mr-2"><Icon name="workset" className="size-[22px]" /></button>
      <StatusSelect label="Subproyecto activo" value="" />
      <button className="ml-2 flex items-center gap-1.5"><Icon name="editable" />:0</button>
      <button aria-label="Opciones de diseño" className="ml-6"><Icon name="options" /></button>
      <button aria-label="Añadir a conjunto" className="mr-2.5 ml-2"><Icon name="addOption" /></button>
      <StatusSelect label="Opción de diseño" value="Modelo base" />
      <div className="mr-[79px] ml-auto flex items-center">
        {selectTools.map(([name, label]) => (
          <button key={name} aria-label={label} className="flex w-[30px] justify-center"><SelectIcon name={name} /></button>
        ))}
        <svg viewBox="0 0 20 20" className="mx-[6px] size-[18px]" aria-hidden="true">
          <circle cx="10" cy="10" r="7" fill="none" stroke="#9c9c9c" strokeWidth="4.500" strokeDasharray="4 1.500" />
        </svg>
        <button className="flex items-center">
          <svg viewBox="0 0 20 20" className="size-[22px]" aria-hidden="true">
            <path d="M1 2h18v3l-7 6v8H8v-8L1 5z" fill="#9aa4b0" stroke="#4d5560" strokeWidth="1.300" /><path d="M3 4h8l-2 5z" fill="#eef1f4" />
          </svg>
          :0
        </button>
      </div>
    </footer>
  );
}

export default function App() {
  return (
    <div className="relative flex h-screen flex-col overflow-hidden bg-[#cbcbcb] font-['Noto_Sans','Open_Sans',sans-serif] text-[#333]">
      <TitleBar />
      <RibbonTabs />
      <Ribbon />
      <div className="h-[33px] bg-[#eee]" />
      <div className="flex min-h-0 flex-1 border-t-2 border-[#cbcbcb]">
        <Properties />
        <div className="w-[3px] border-l border-[#f4f4f4] bg-[#cbcbcb]" />
        <Workspace />
        <div className="w-[3px] bg-[#cbcbcb]" />
        <Browser />
      </div>
      <StatusBar />
      <div role="tooltip" className="absolute top-[134px] right-[44px] w-[257px] rounded-sm border border-[#d6d6d6] bg-[#f0f0f0] pr-2 pl-[9px] text-sm whitespace-nowrap text-[#444] shadow-md">
        <p className="mt-[10px]"><b>Nivel</b> (LL)</p>
        <p className="mt-2">Añade un nivel al modelo.</p>
        <hr className="mt-[9px] -ml-2 border-[#bbb]" />
        <p className="mt-2 mb-[10px] font-bold">Pulse F1 para obtener más ayuda</p>
      </div>
    </div>
  );
}
